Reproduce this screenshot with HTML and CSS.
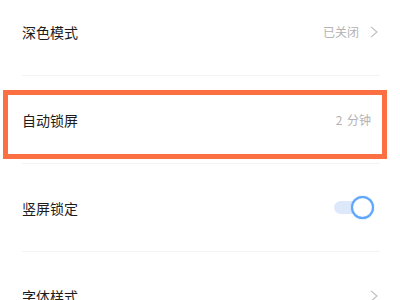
FILE: index.html
```html
<!DOCTYPE html>
<html lang="zh">
<head>
<meta charset="utf-8">
<link rel="stylesheet" href="styles.css">
</head>
<body>
<div class="list">
  <div class="row">
    <span class="label">深色模式</span>
    <span class="value">已关闭</span>
    <svg class="chev" width="8" height="12" viewBox="0 0 8 12"><polyline points="1,0.8 7,6 1,11.2" fill="none" stroke="#bdbdbd" stroke-width="1.1"/></svg>
  </div>
  <div class="row highlighted">
    <span class="label">自动锁屏</span>
    <span class="value value-only">2 分钟</span>
  </div>
  <div class="row">
    <span class="label">竖屏锁定</span>
    <span class="toggle"><span class="track"></span><span class="knob"></span></span>
  </div>
  <div class="row">
    <span class="label">字体样式</span>
    <svg class="chev" width="8" height="12" viewBox="0 0 8 12"><polyline points="1,0.8 7,6 1,11.2" fill="none" stroke="#bdbdbd" stroke-width="1.1"/></svg>
  </div>
</div>
</body>
</html>
```
FILE: styles.css
```css
html, body {
  margin: 0;
  padding: 0;
  background: #ffffff;
  overflow: hidden;
  width: 400px;
  height: 300px;
}
.list {
  margin-top: -12px;
  font-family: "Noto Sans CJK SC", "Noto Sans", sans-serif;
}
.row {
  position: relative;
  display: flex;
  align-items: center;
  height: 87px;
  margin: 0 20px 0 22px;
  border-bottom: 1px solid #f3f3f3;
}
.label {
  flex: 1;
  font-size: 14px;
  color: #1c1c1c;
  line-height: 20px;
}
.value {
  font-size: 12px;
  color: #b3b3b3;
  line-height: 16px;
  margin-right: 11px;
}
.value-only {
  margin-right: 9px;
  word-spacing: 2px;
}
.chev {
  display: block;
  margin-right: 2px;
}
.highlighted::after {
  content: "";
  position: absolute;
  left: -19px;
  top: 14px;
  width: 374px;
  height: 59px;
  border: 5px solid #fc6f42;
}
.toggle {
  display: flex;
  align-items: center;
  margin-right: 6px;
}
.track {
  width: 30px;
  height: 13px;
  border-radius: 7px;
  background: #dde9fb;
}
.knob {
  width: 19px;
  height: 19px;
  margin-left: -13px;
  border-radius: 50%;
  background: #ffffff;
  border: 2.5px solid #5ea5fb;
  box-shadow: 0 0 1.5px #9ac6ff, inset 0 0 1px #9ac6ff;
}
```
